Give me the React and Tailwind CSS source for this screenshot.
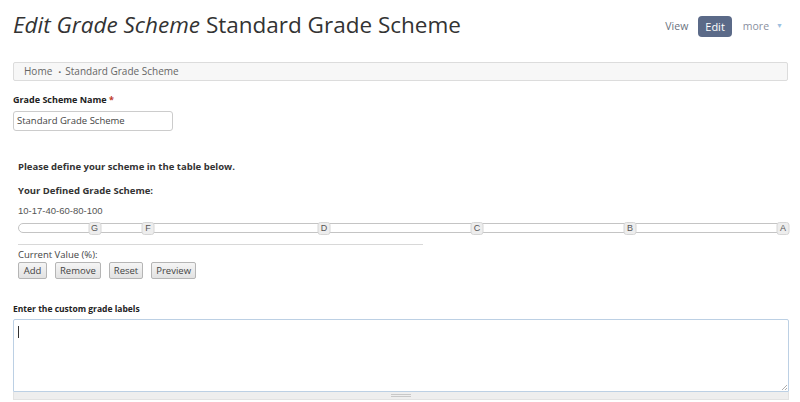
import React from "react";

const handles = [
  { label: "G", value: 10 },
  { label: "F", value: 17 },
  { label: "D", value: 40 },
  { label: "C", value: 60 },
  { label: "B", value: 80 },
  { label: "A", value: 100 },
];

export default function App() {
  return (
    <div className="min-h-screen w-[800px] bg-white px-[13px] text-[#333]" style={{ fontFamily: '"Open Sans", sans-serif' }}>
      {/* Header */}
      <div className="flex h-[56px] items-start justify-between">
        <h1 className="mt-[8px] text-[22.5px] leading-[34px] font-normal text-[#333]">
          <em>Edit Grade Scheme</em> Standard Grade Scheme
        </h1>
        <div className="mt-[16px] mr-[4px] flex items-center text-[10.5px]">
          <span className="mr-[10px] text-[#6b7280]">View</span>
          <span className="rounded-[4px] bg-[#5b6a88] px-[7px] py-[3px] text-[11px] leading-[15px] text-white">Edit</span>
          <span className="ml-[11px] text-[#8a8fa0]">more</span>
          <span className="ml-[7px] text-[7px] text-[#9cc0e0]">▼</span>
        </div>
      </div>

      {/* Breadcrumb */}
      <div className="mt-[6px] mr-[-1px] flex h-[19px] items-center rounded-[2px] border border-[#dcdcdc] bg-[#f7f7f7] pl-[10px] text-[10px] text-[#666]">
        <span>Home</span>
        <span className="ml-[6px] mr-[4px] text-[8px]">•</span>
        <span>Standard Grade Scheme</span>
      </div>

      {/* Name */}
      <div className="mt-[13px] text-[9px] font-bold leading-[12px] text-[#222]">
        Grade Scheme Name <span className="text-[#c0392b]">*</span>
      </div>
      <div className="mt-[5px] flex h-[20px] w-[160px] items-center rounded-[3px] border border-[#ccc] pl-[3px] text-[9.5px] text-[#444]">
        Standard Grade Scheme
      </div>

      {/* Scheme */}
      <div className="pl-[5px]">
        <div className="mt-[29px] text-[9.5px] font-bold leading-[14px] text-[#333]">
          Please define your scheme in the table below.
        </div>
        <div className="mt-[10px] text-[9.5px] font-bold leading-[14px] text-[#333]">
          Your Defined Grade Scheme:
        </div>
        <div className="mt-[7px] text-[9.5px] leading-[12px] text-[#555]" style={{ fontFamily: '"Liberation Sans", Arial, sans-serif' }}>
          10-17-40-60-80-100
        </div>

        {/* Slider */}
        <div className="relative mt-[5px] h-[12px] w-[765px]">
          <div className="absolute left-0 right-0 top-[1px] h-[10px] rounded-l-[5px] border border-[#c4c4c4] bg-white" />
          {handles.map((h) => (
            <div
              key={h.label}
              className="absolute top-0 flex h-[13px] w-[13px] -translate-x-1/2 items-center justify-center rounded-[3px] border border-[#d6d6d6] bg-[#ededed] text-[9px] text-[#555]"
              style={{ left: `${h.value}%`, fontFamily: '"Liberation Sans", Arial, sans-serif' }}
            >
              {h.label}
            </div>
          ))}
        </div>

        <div className="mt-[10px] w-[405px] border-t border-[#d8d8d8]" />
        <div className="mt-[3px] text-[9.5px] leading-[13px] text-[#444]">Current Value (%):</div>
        <div className="mt-[1px] flex gap-[8px]">
          {["Add", "Remove", "Reset", "Preview"].map((b) => (
            <button
              key={b}
              className="h-[17px] min-w-[29px] rounded-[2px] border border-[#b5b5b5] bg-gradient-to-b from-[#f5f5f5] to-[#e2e2e2] px-[4px] text-[9.5px] leading-[14px] text-[#444]"
            >
              {b}
            </button>
          ))}
        </div>
      </div>

      {/* Labels */}
      <div className="mt-[24px] text-[8.5px] font-bold leading-[12px] text-[#222]">
        Enter the custom grade labels
      </div>
      <div className="mt-[4px] mr-[-2px]">
        <div className="relative h-[73px] rounded-t-[2px] border border-[#bcd0e4] bg-white">
          <div className="absolute left-[4px] top-[6px] h-[12px] w-[1px] bg-[#333]" />
          <svg className="absolute bottom-[1px] right-[1px]" width="6" height="6" viewBox="0 0 6 6">
            <path d="M6 1L1 6M6 4L4 6" stroke="#999" strokeWidth="0.8" />
          </svg>
        </div>
        <div className="flex h-[8px] items-center justify-center border-x border-b border-[#e2e2e2] bg-[#eeeeee]">
          <div className="h-[3px] w-[20px] border-y border-[#c8c8c8]" />
        </div>
      </div>
    </div>
  );
}
